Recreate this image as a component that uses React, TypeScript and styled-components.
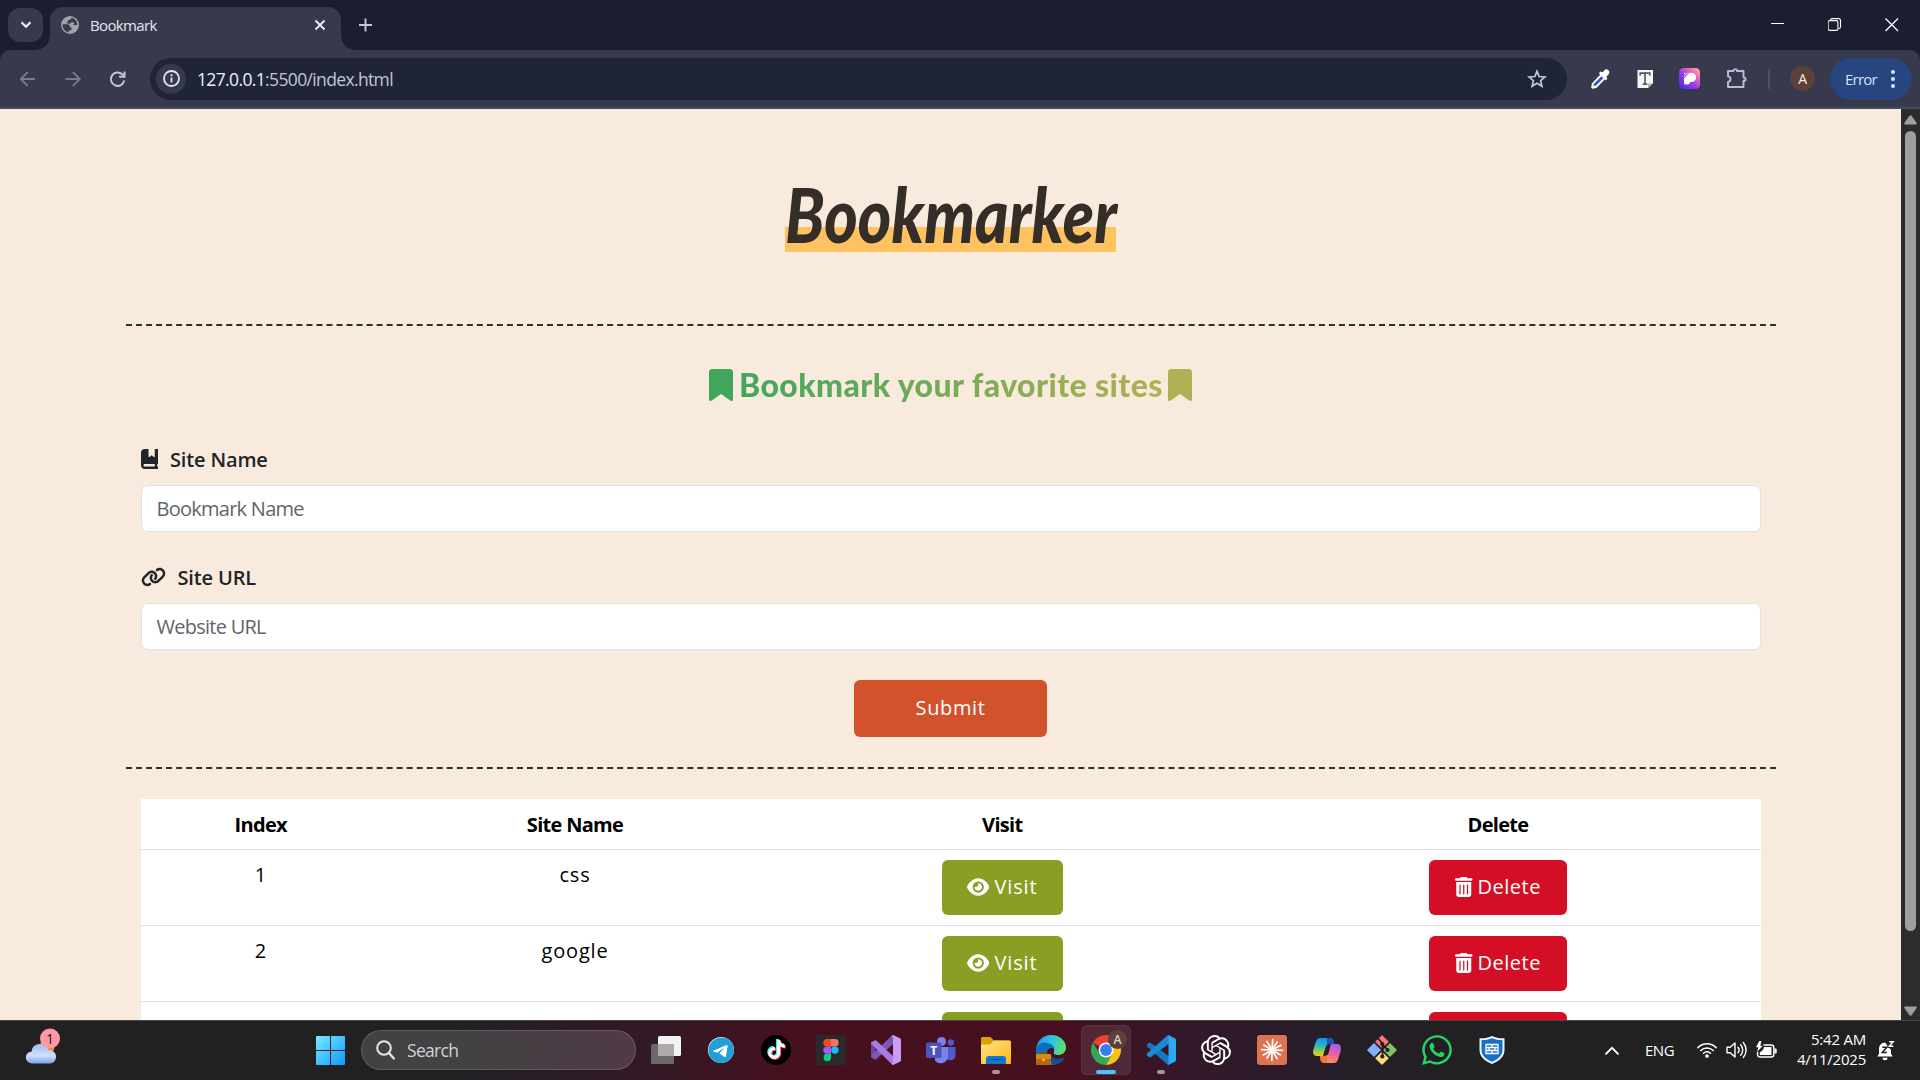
import React from "react";
import styled, { createGlobalStyle, css } from "styled-components";
import { FaBookmark, FaBookBookmark, FaLink, FaEye, FaTrashCan, FaTelegram, FaTiktok, FaWhatsapp } from "react-icons/fa6";
import { SiOpenai } from "react-icons/si";

const ui = `"Open Sans", "Noto Sans", sans-serif`;

const GlobalStyle = createGlobalStyle`
  * { box-sizing: border-box; }
  body { margin: 0; overflow: hidden; font-family: ${ui}; }
  svg { display: block; flex: none; }
`;

const Screen = styled.div`
  display: flex;
  flex-direction: column;
  width: 1920px;
  height: 1080px;
  overflow: hidden;
`;

const row = css`
  display: flex;
  align-items: center;
`;

/* ---------- browser chrome ---------- */

const TabStrip = styled.div`
  display: flex;
  align-items: flex-start;
  height: 50px;
  background: #1a1e30;
  padding-left: 8px;
`;

const TabSearch = styled.div`
  ${row}
  justify-content: center;
  width: 35px;
  height: 34px;
  margin-top: 8px;
  border-radius: 12px;
  background: #363a4c;
`;

const Tab = styled.div`
  ${row}
  position: relative;
  width: 291px;
  height: 43px;
  margin: 7px 0 0 7px;
  padding: 0 15px 7px 11px;
  border-radius: 13px 13px 0 0;
  background: #363a4c;
  color: #e4e6ee;
  &::before, &::after {
    content: "";
    position: absolute;
    bottom: 0;
    width: 14px;
    height: 14px;
  }
  &::before { left: -14px; background: radial-gradient(circle at 0 0, transparent 13.5px, #363a4c 14px); }
  &::after { right: -14px; background: radial-gradient(circle at 100% 0, transparent 13.5px, #363a4c 14px); }
`;

const TabTitle = styled.span`
  flex: 1;
  margin-left: 11px;
  font-size: 15px;
  letter-spacing: -0.65px;
`;

const NewTab = styled.div`
  margin: 18px 0 0 18px;
`;

const WindowButtons = styled.div`
  ${row}
  gap: 43px;
  margin: 16px 21px 0 auto;
`;

const ToolbarBack = styled.div`
  background: #1a1e30;
`;

const Toolbar = styled.div`
  ${row}
  height: 59px;
  padding: 0 8px 0 20px;
  border-bottom: 2px solid #474a5a;
  border-radius: 10px 10px 0 0;
  background: #363a4c;
`;

const NavButtons = styled.div`
  ${row}
  gap: 28.5px;
  width: 130px;
`;

const Omnibox = styled.div`
  ${row}
  width: 1417px;
  height: 42px;
  padding: 0 20px 0 6px;
  border-radius: 21px;
  background: #202437;
`;

const SiteInfo = styled.div`
  ${row}
  justify-content: center;
  width: 30px;
  height: 30px;
  border-radius: 50%;
  background: #363a4c;
`;

const Address = styled.span`
  flex: 1;
  margin-left: 11px;
  font-size: 17.5px;
  letter-spacing: -0.64px;
  color: #c4c7d2;
  b { font-weight: 400; color: #f0f1f6; }
`;

const Extensions = styled.div`
  ${row}
  gap: 25.7px;
  margin-left: 23px;
`;

const Divider = styled.div`
  width: 2px;
  height: 20px;
  margin-left: 20px;
  background: #4d5163;
`;

const Avatar = styled.div`
  ${row}
  justify-content: center;
  width: 25px;
  height: 25px;
  margin-left: 20px;
  border-radius: 50%;
  background: #5d4037;
  color: #f5efec;
  font-size: 14px;
`;

const ErrorPill = styled.div`
  ${row}
  justify-content: space-between;
  width: 82px;
  height: 42px;
  margin-left: auto;
  padding: 0 17.5px 0 15px;
  border-radius: 21px;
  background: #28457f;
  color: #d9e2fb;
  font-size: 15px;
  letter-spacing: -0.75px;
`;

/* ---------- web page ---------- */

const Viewport = styled.div`
  display: flex;
  height: 911px;
  overflow: hidden;
`;

const Page = styled.main`
  flex: 1;
  height: 911px;
  overflow: hidden;
  background: #f8ebdd;
`;

const Container = styled.div`
  width: 1650px;
  margin: 0 auto;
`;

const Hero = styled.header`
  display: flex;
  justify-content: center;
  height: 217px;
  padding-top: 63px;
  border-bottom: 2px dashed #352d28;
`;

const Logo = styled.h1`
  width: 331px;
  height: 80px;
  margin: 0;
  padding-top: 6px;
  background: linear-gradient(transparent 55px, #ffc261 55px);
  color: #352d28;
  font: italic 900 64px/80px Lato, sans-serif;
  white-space: nowrap;
  span {
    display: inline-block;
    transform: scaleY(1.18);
    transform-origin: 50% 60px;
  }
`;

const Form = styled.form`
  height: 443px;
  padding: 0 15px;
  border-bottom: 2px dashed #352d28;
`;

const SubtitleArea = styled.header`
  padding: 39px 0 39px;
`;

const Subtitle = styled.h2`
  ${row}
  justify-content: center;
  gap: 6px;
  height: 40px;
  margin: 0;
  font: 900 32px/40px Lato, sans-serif;
  letter-spacing: 0.4px;
  span {
    width: 423px;
    white-space: nowrap;
    color: transparent;
    background: linear-gradient(90deg, #40a65c, #b0b054);
    background-clip: text;
    -webkit-background-clip: text;
  }
`;

const Ribbon = styled(FaBookmark)<{ $tone: string }>`
  width: 24px;
  height: 32px;
  color: ${(p) => p.$tone};
`;

const BookIcon = styled(FaBookBookmark)`
  width: 17.5px;
  height: 20px;
`;

const LinkIcon = styled(FaLink)`
  width: 25px;
  height: 20px;
`;

const EyeIcon = styled(FaEye)`
  width: 22.5px;
  height: 20px;
`;

const TrashIcon = styled(FaTrashCan)`
  width: 17.5px;
  height: 20px;
`;

const Field = styled.div`
  margin-bottom: 30px;
`;

const Label = styled.label`
  ${row}
  gap: 12px;
  height: 30px;
  margin-bottom: 11px;
  font-size: 20px;
  font-weight: 650;
  letter-spacing: -0.15px;
  color: #212529;
`;

const Input = styled.input`
  display: block;
  width: 100%;
  height: 47px;
  padding: 0 15px;
  border: 1px solid #dee2e6;
  border-radius: 7px;
  background: #fff;
  font: 400 20px/30px ${ui};
  letter-spacing: -0.74px;
  &::placeholder { color: #5f656b; opacity: 1; }
`;

const Button = styled.button<{ $bg: string }>`
  ${row}
  justify-content: center;
  gap: 5px;
  height: 55px;
  margin: 0 auto;
  padding: 0 0 2px;
  border: 0;
  border-radius: 6px;
  background: ${(p) => p.$bg};
  color: #fff;
  font: 500 20px/30px ${ui};
`;

const SubmitButton = styled(Button)`
  width: 193px;
  height: 57px;
  letter-spacing: 0.6px;
`;

const VisitButton = styled(Button)`
  width: 121px;
  letter-spacing: 0.9px;
`;

const DeleteButton = styled(Button)`
  width: 138px;
  letter-spacing: 0.5px;
`;

const Table = styled.table`
  width: 1620px;
  margin: 30px 15px 0;
  border-collapse: separate;
  border-spacing: 0;
  table-layout: fixed;
  background: #fff;
  color: #000;
  font-size: 20px;
  line-height: 30px;
  text-align: center;
`;

const HeadCell = styled.th<{ $w: number }>`
  width: ${(p) => p.$w}px;
  height: 51px;
  padding: 11px 10px 9px;
  border-bottom: 1px solid #dee2e6;
  font-weight: 700;
  letter-spacing: -0.7px;
`;

const Cell = styled.td`
  height: 76px;
  padding: 10px;
  border-bottom: 1px solid #dee2e6;
  vertical-align: top;
  letter-spacing: 0.8px;
`;

const Scrollbar = styled.div`
  display: flex;
  flex-direction: column;
  align-items: center;
  width: 19px;
  padding: 6px 0 4px;
  background: #2c2c2c;
`;

const Thumb = styled.div`
  width: 11px;
  height: 800px;
  margin: 6px 0 auto;
  border-radius: 6px;
  background: #9f9f9f;
`;

/* ---------- taskbar ---------- */

const Taskbar = styled.footer`
  ${row}
  height: 60px;
  box-shadow: inset 0 1px #4a4547;
  background: linear-gradient(90deg, #212121 0, #212124 460px, #331825 650px, #47101e 800px, #47101e 1060px, #32182a 1190px, #251f28 1350px, #212121 1510px);
`;

const Weather = styled.div`
  width: 44px;
  margin-left: 20px;
`;

const Start = styled.div`
  margin-left: 252px;
`;

const SearchBox = styled.div`
  ${row}
  gap: 12px;
  width: 275px;
  height: 40px;
  margin-left: 16px;
  padding-left: 14px;
  border: 1px solid rgba(255, 255, 255, 0.16);
  border-radius: 20px;
  background: rgba(255, 255, 255, 0.15);
  color: #d4d2d3;
  font-size: 17.5px;
  letter-spacing: -0.7px;
`;

const Apps = styled.div`
  ${row}
  gap: 5.05px;
  margin-left: 5px;
`;

const AppTile = styled.div<{ $state?: "active" | "open" }>`
  ${row}
  position: relative;
  justify-content: center;
  width: 50px;
  height: 50px;
  border-radius: 6px;
  ${(p) => p.$state === "active" && css`
    background: rgba(255, 255, 255, 0.09);
    box-shadow: inset 0 0 0 1px rgba(255, 255, 255, 0.06);
  `}
  ${(p) => p.$state && css`
    &::after {
      content: "";
      position: absolute;
      bottom: 1px;
      left: 50%;
      width: ${p.$state === "active" ? 20 : 8}px;
      height: 4px;
      border-radius: 2px;
      transform: translateX(-50%);
      background: ${p.$state === "active" ? "#4cc2ff" : "#a7959b"};
    }
  `}
`;

const Tray = styled.div`
  ${row}
  margin-left: auto;
  padding-right: 25px;
  color: #fff;
  font-size: 15px;
`;

const Language = styled.span`
  width: 30px;
  margin: 0 22px 1px 26px;
  letter-spacing: -0.5px;
`;

const StatusIcons = styled.div`
  ${row}
  gap: 9px;
`;

const Clock = styled.div`
  width: 80px;
  margin: 0 11px 3px 9px;
  text-align: right;
  line-height: 20px;
  letter-spacing: -0.22px;
`;

/* ---------- drawings ---------- */

const Globe = () => (
  <svg width="18" height="18" viewBox="0 0 18 18">
    <circle cx="9" cy="9" r="9" fill="#9ea3a8" />
    <path d="M1.600 8.300h4.700c1.600 0 2.700 1.100 2.700 2.600v.6h1.500v1.600c0 .8-.6 1.400-1.400 1.400H7.600v1.900c-3.800-.7-6.400-4.200-6-8.100z" fill="#363a4c" />
    <path d="M10.200 1.700v.5c0 .9-.7 1.700-1.600 1.700H6.900v1.500c0 .8-.4 1.100-1.200 1.100v1h3.800c2 0 2.700 1.400 3.900 1.400h2.900c0-3.600-2.600-6.700-6.100-7.200z" fill="#363a4c" />
    <path d="M9.800 6.300h3.200v2H9.800z" fill="#9ea3a8" />
  </svg>
);

const Reload = () => (
  <svg width="18" height="18" viewBox="0 0 18 18" fill="none" stroke="#c3c7dc" strokeWidth="2">
    <path d="M15.200 10.400A6.700 6.700 0 1 1 13.200 4.300L15.200 6.300" />
    <path d="M15.500 1.600v5.200h-5.400" />
  </svg>
);

const Arrow = ({ flip = false }: { flip?: boolean }) => (
  <svg width="16" height="16" viewBox="0 0 16 16" fill="none" stroke="#777b8c" strokeWidth="1.800">
    <path d={flip ? "M0.500 8h14M7.800 1l7 7-7 7" : "M15 8h-14M7.700 1l-7 7 7 7"} />
  </svg>
);

const Eyedropper = () => (
  <svg width="21" height="22" viewBox="0 0 22 22">
    <path d="M11.500 5.500l5 5-9.800 9.800-4.300.9-1.200-1.200.8-4.400z" fill="#fff" />
    <path d="M12 8.200l2 2-7.700 7.600-2.700.7.500-2.600z" fill="#2f55c8" />
    <path d="M10.800 3.200l2.400.8 2.400-2.600c2-2 6.400 1.700 4.200 4.300L17.300 8.400l.8 2.600-1.500 1.200-7.200-7.200z" fill="#fff" />
  </svg>
);

const TextExtension = () => (
  <svg width="17" height="18" viewBox="0 0 17 18">
    <path d="M.5 0H16v13l-5 5H.5z" fill="#f6f6f6" />
    <path d="M11 18v-4.500h5z" fill="#b4b4b4" />
    <path d="M3.200 5.400V3.200h9.600v2.200M8 3.200v11M5.700 14.200h4.600" fill="none" stroke="#555a63" strokeWidth="1.700" />
  </svg>
);

const PaletteExtension = () => (
  <svg width="21" height="21" viewBox="0 0 21 21">
    <defs>
      <linearGradient id="pal" x1="0" y1="1" x2="1" y2="0">
        <stop offset="0" stopColor="#3a2cf0" />
        <stop offset=".45" stopColor="#9a3be8" />
        <stop offset=".75" stopColor="#f471b4" />
        <stop offset="1" stopColor="#ffc09a" />
      </linearGradient>
    </defs>
    <rect width="21" height="21" rx="4.500" fill="url(#pal)" />
    <path d="M5 10.200L10.500 4.700H12.500a4.500 4.500 0 0 1 0 9.300H11c0 1.500-.8 2.500-2 2.500H6.500c-1 0-1.500-.6-1.500-1.500z" fill="#fff" />
    <path d="M5 8.400l3.600-3.600M5 6l1.300-1.200" stroke="#fff" strokeWidth=".9" />
  </svg>
);

const Puzzle = () => (
  <svg width="22" height="21" viewBox="0 0 22 21" fill="none" stroke="#b9bdd6" strokeWidth="1.900" strokeLinejoin="round">
    <path d="M2 3h5.500c0-2.500 3.500-2.500 3.500 0h6.500v6.500c2.800 0 2.800 3.300 0 3.300v6.200H2v-5c3.300-.5 3.300-5.300 0-5.800z" />
  </svg>
);

const TaskView = () => (
  <svg width="30" height="28" viewBox="0 0 30 28">
    <rect y="8" width="23" height="20" rx="1.500" fill="#6b6868" />
    <rect x="7" y="0" width="23" height="20" rx="1.500" fill="#f2f2f2" />
    <path d="M7 8h16v12H8.500A1.500 1.500 0 0 1 7 18.500z" fill="#aeaaaa" />
  </svg>
);

const Disc = styled.div<{ $size: number; $bg: string }>`
  ${row}
  position: relative;
  justify-content: center;
  width: ${(p) => p.$size}px;
  height: ${(p) => p.$size}px;
  border-radius: 50%;
  background: ${(p) => p.$bg};
  overflow: hidden;
`;

const NoteStack = styled.div`
  position: relative;
  width: 18px;
  height: 20px;
  svg { position: absolute; left: 0; top: 0; }
  svg:nth-child(1) { left: -1px; top: -1px; color: #25f4ee; }
  svg:nth-child(2) { left: 1px; top: 1px; color: #fe2c55; }
  svg:nth-child(3) { color: #fff; }
`;

const Figma = () => (
  <svg width="30" height="30" viewBox="0 0 30 30">
    <rect width="30" height="30" rx="1.500" fill="#2b2a2b" />
    <path d="M15 4h-4a3.700 3.700 0 0 0 0 7.400h4z" fill="#f24e1e" />
    <path d="M15 4h4a3.700 3.700 0 0 1 0 7.400h-4z" fill="#ff7262" />
    <path d="M15 11.400h-4a3.700 3.700 0 0 0 0 7.400h4z" fill="#a259ff" />
    <circle cx="18.900" cy="15.100" r="3.700" fill="#1abcfe" />
    <path d="M15 18.800h-4a3.700 3.700 0 1 0 4 3.700z" fill="#0acf83" />
  </svg>
);

const VisualStudio = () => (
  <svg width="30" height="30" viewBox="0 0 30 30">
    <path d="M0 7.500L4.500 5.500v19L0 22z" fill="#6a479f" />
    <path d="M0 22v-1.500L20 1.500 22 0v9L5.500 24a2 2 0 0 1-2 .4z" fill="#7d57b8" />
    <path d="M0 8.500V7.500l3.500-2a2 2 0 0 1 2 .3L22 21v9l-2-1.500z" fill="#a87be2" />
    <path d="M20 1.500L22 0l7 3.300a2 2 0 0 1 1 1.700v20a2 2 0 0 1-1 1.700L22 30l-2-1.500c1.200.4 2-.3 2-1.500V3c0-1.200-.8-1.900-2-1.500z" fill="#cb9bf8" />
  </svg>
);

const Teams = () => (
  <svg width="30" height="27" viewBox="0 0 30 27">
    <circle cx="24.800" cy="5.500" r="3.200" fill="#5059c9" />
    <path d="M20 10h9.500v8.500a5 5 0 0 1-9.500 2z" fill="#5059c9" />
    <circle cx="15.500" cy="4.500" r="4.500" fill="#7b83eb" />
    <path d="M9 10h13v9.500a7.300 7.300 0 0 1-13 4z" fill="#7b83eb" />
    <rect y="5.500" width="15.500" height="15.500" rx="1.500" fill="#4b53bc" />
    <text x="7.700" y="17.500" textAnchor="middle" fill="#fff" fontFamily="Open Sans, sans-serif" fontWeight="700" fontSize="12">T</text>
  </svg>
);

const Explorer = () => (
  <svg width="30" height="27" viewBox="0 0 30 27">
    <defs>
      <linearGradient id="fold" x1="0" y1="0" x2="1" y2="1">
        <stop offset="0" stopColor="#ffe48a" />
        <stop offset="1" stopColor="#fcb913" />
      </linearGradient>
    </defs>
    <path d="M0 1.500A1.500 1.500 0 0 1 1.500 0h8l3.500 3.500h15a2 2 0 0 1 2 2V12H0z" fill="#e0a000" />
    <path d="M0 7.500h9l4-4h15.500A1.500 1.500 0 0 1 30 5v21a1 1 0 0 1-1 1H1a1 1 0 0 1-1-1z" fill="url(#fold)" />
    <path d="M5 27v-5a3 3 0 0 1 3-3h14a3 3 0 0 1 3 3v5z" fill="#0f78d4" />
    <path d="M9 22.500h12" stroke="#0a4f98" strokeWidth="1.200" strokeLinecap="round" />
  </svg>
);

const Edge = () => (
  <svg width="30" height="30" viewBox="0 0 30 30">
    <defs>
      <linearGradient id="edgeTop" x1="0" y1=".3" x2="1" y2=".6">
        <stop offset="0" stopColor="#1f9be6" />
        <stop offset=".5" stopColor="#34c6dc" />
        <stop offset="1" stopColor="#62e257" />
      </linearGradient>
    </defs>
    <path d="M0 16C0 6.500 6.500 0 15 0c9 0 15 6 15 12.500 0 5-4 7.500-8 7.500-3 0-5-1.200-4.200-3C20 12 14 9 9 11 4 13 4 21 6 25 2 23 0 20 0 16z" fill="url(#edgeTop)" />
    <path d="M0 16c0-5 4-9 9-8.500C14 8 18 10 18 14c-4-3-8 1-7 6 1 4 5 7 10 6 3-.3 5-1.300 7.300-2.500C25 28 20 30 15 30 6 30 0 24 0 16z" fill="#0c6fc4" />
    <path d="M15 19c1 5 8 6 13.500 3-3 5.500-7 8-12.500 8z" fill="#154e91" />
    <rect y="19" width="15" height="11" rx="1" fill="#d98a12" />
    <path d="M4.500 19v-1.800h6V19" fill="none" stroke="#8b4c05" strokeWidth="1.400" />
    <path d="M0 24h15v6H0z" fill="#b8660a" />
    <rect x="6.500" y="24" width="2" height="2" fill="#ffe08a" />
  </svg>
);

const Chrome = () => (
  <svg width="44" height="44" viewBox="-3 -3 44 44">
    <path d="M19 19L6 11.500A15 15 0 0 1 32 11.500z" fill="#ea4335" />
    <path d="M6 11.500A15 15 0 0 0 19 34l6.500-11.200L12.500 22.800z" fill="#34a853" />
    <path d="M19 12h13.300A15 15 0 0 1 19 34l6.300-11.300z" fill="#fbc116" />
    <circle cx="19" cy="19" r="7.500" fill="#fff" />
    <circle cx="19" cy="19" r="5.900" fill="#3b7ded" />
    <circle cx="30.500" cy="8.500" r="9.500" fill="#5d4037" />
    <text x="30.500" y="13" textAnchor="middle" fill="#ddd2ce" fontFamily="Open Sans, sans-serif" fontWeight="600" fontSize="12">A</text>
  </svg>
);

const VSCode = () => (
  <svg width="30" height="30" viewBox="0 0 30 30">
    <path d="M1 9.500l2-1.800h1.500L24 22v7.500L22 30 .8 11.200z" fill="#1479c4" />
    <path d="M1 20.500l2 1.800h1.500L24 8V.5L22 0 .8 18.800z" fill="#1b8ad6" />
    <path d="M22 0l7 3.200a2 2 0 0 1 1 1.600v20.400a2 2 0 0 1-1 1.600L22 30c.4-.4.500-.8.500-1.300V1.300C22.500.8 22.400.4 22 0z" fill="#2fa8f2" />
  </svg>
);

const Claude = () => (
  <svg width="30" height="30" viewBox="0 0 30 30">
    <rect width="30" height="30" rx="3" fill="#dd7350" />
    <g stroke="#fff" strokeWidth="1.700" strokeLinecap="round">
      {[4, 33, 62, 92, 120, 149, 181, 212, 240, 272, 301, 329].map((a, i) => (
        <path key={a} d={`M15 15V${[4.500, 5.500, 5][i % 3]}`} transform={`rotate(${a} 15 15)`} />
      ))}
    </g>
  </svg>
);

const Copilot = () => (
  <svg width="28" height="25" viewBox="0 0 28 25">
    <defs>
      <linearGradient id="cpA" x1=".4" y1="0" x2=".3" y2="1">
        <stop offset="0" stopColor="#168ff0" />
        <stop offset=".45" stopColor="#2fb9c0" />
        <stop offset=".75" stopColor="#9ccb4a" />
        <stop offset="1" stopColor="#f8c812" />
      </linearGradient>
      <linearGradient id="cpB" x1=".7" y1="0" x2=".3" y2="1">
        <stop offset="0" stopColor="#a45cf0" />
        <stop offset=".5" stopColor="#f0619a" />
        <stop offset="1" stopColor="#ff9a4a" />
      </linearGradient>
    </defs>
    <path d="M7 0h10c2 0 3 1.500 3.500 3.500L21 6h-5c-2 0-3 1.500-3.700 4L10 18H4c-4 0-4.500-3-3.500-7L3 3.500C3.700 1.300 5 0 7 0z" fill="url(#cpA)" />
    <path d="M14 0h3c2 0 3 1.500 3.500 3.500L21 6h-5l-2 1.500z" fill="#1b50c4" />
    <path d="M21 25H11c-2 0-3-1.500-3.500-3.500L7 18h5c2 0 3-1 3.700-3.500L18 6h6c4 0 4.500 3.500 3.500 7.500L25 21.500c-.7 2.200-2 3.500-4 3.500z" fill="url(#cpB)" />
    <path d="M14 25h-3c-2 0-3-1.500-3.500-3.500L7 18h5l2-1z" fill="#f9743b" />
  </svg>
);

const Git = () => (
  <svg width="30" height="30" viewBox="0 0 30 30">
    <path d="M15 0l6.800 6.800-6.800 6.800-6.800-6.800z" fill="#f8787c" />
    <path d="M7 8l7 7-7 7-7-7z" fill="#84b0fb" />
    <path d="M23 8l7 7-7 7-7-7z" fill="#7fc661" />
    <path d="M15 16.400l6.800 6.800L15 30l-6.800-6.800z" fill="#fbdc77" />
    <path d="M11 3.500l4.500 5v13M15.500 9.500l5.500 5.500" fill="none" stroke="#23191f" strokeWidth="1.700" />
    <circle cx="15.300" cy="9" r="2.100" fill="#23191f" />
    <circle cx="20.500" cy="15" r="2.100" fill="#23191f" />
    <circle cx="15.300" cy="21.500" r="2.100" fill="#23191f" />
  </svg>
);

const Shield = () => (
  <svg width="26" height="28" viewBox="0 0 26 28">
    <path d="M13 0c4 2 8 2.500 12.500 2.300V14c0 6.500-5 11-12.500 14C5.500 25 .5 20.500.5 14V2.300C5 2.500 9 2 13 0z" fill="#e9f4fc" />
    <path d="M13 2.200c3.500 1.400 6.800 1.900 10.500 1.800v10c0 5.300-4 9-10.500 11.800C6.500 23 2.500 19.300 2.500 14V4C6.200 4.100 9.500 3.600 13 2.200z" fill="#1670c6" />
    <path d="M7 8.500h12v9H7zM7 11.500h12M7 14.500h12M13 8.500v3M10 11.500v3M16 11.500v3M13 14.500v3" fill="none" stroke="#fff" strokeWidth="1.300" />
  </svg>
);

const WeatherIcon = () => (
  <svg width="44" height="44" viewBox="0 0 44 44">
    <defs>
      <linearGradient id="cl" x1="0" y1="0" x2="0" y2="1">
        <stop offset="0" stopColor="#9dbdf5" />
        <stop offset=".6" stopColor="#cfe0fa" />
        <stop offset="1" stopColor="#7ba2ea" />
      </linearGradient>
    </defs>
    <circle cx="27" cy="19" r="7.500" fill="#f08a1a" />
    <path d="M12 35.500a6 6 0 0 1-.3-12C12 18 16 16 20 16s7.500 2.500 8 6c4-.3 8 2 8 6.700 0 4-3 6.800-6.500 6.800z" fill="url(#cl)" />
    <circle cx="30" cy="10.500" r="10" fill="#ff99a4" />
    <text x="30" y="15.500" textAnchor="middle" fill="#241416" fontFamily="Open Sans, sans-serif" fontSize="14">1</text>
  </svg>
);

const WindowsLogo = () => (
  <svg width="29" height="29" viewBox="0 0 29 29">
    <defs>
      <linearGradient id="win" x1="0" y1="0" x2="1" y2="1">
        <stop offset="0" stopColor="#75edff" />
        <stop offset="1" stopColor="#0d98ff" />
      </linearGradient>
    </defs>
    <path d="M1 0h13v14H0V1a1 1 0 0 1 1-1zM15 0h13a1 1 0 0 1 1 1v13H15zM0 15h14v14H1a1 1 0 0 1-1-1zM15 15h14v13a1 1 0 0 1-1 1H15z" fill="url(#win)" />
  </svg>
);

const Wifi = () => (
  <svg width="20" height="16" viewBox="0 0 20 16" fill="none" stroke="#fff" strokeWidth="1.500" strokeLinecap="round">
    <path d="M.9 5.600a12.800 12.800 0 0 1 18.200 0M3.700 8.500a8.900 8.900 0 0 1 12.600 0M6.500 11.300a4.900 4.900 0 0 1 7 0" />
    <circle cx="10" cy="14" r="1.100" fill="#fff" />
  </svg>
);

const Volume = () => (
  <svg width="21" height="18" viewBox="0 0 21 18" fill="none" stroke="#fff" strokeWidth="1.400" strokeLinecap="round" strokeLinejoin="round">
    <path d="M1 6.200h3.200L9 2v14l-4.800-4.200H1zM12 6.200a4.400 4.400 0 0 1 0 5.600M14.700 3.700a8 8 0 0 1 0 10.600M17.300 1.500a11.500 11.500 0 0 1 0 15" />
  </svg>
);

const Battery = () => (
  <svg width="21" height="18" viewBox="0 0 21 18">
    <path d="M7.500 4h7.800A2.500 2.500 0 0 1 17.800 6.500v7a2.500 2.500 0 0 1-2.500 2.500H4a2.500 2.500 0 0 1-2.500-2.500V11" fill="none" stroke="#fff" strokeWidth="1.400" />
    <path d="M8 6h7.500v8H3.800v-2.500L7 9z" fill="#fff" />
    <path d="M18.500 7.500h1.200a1 1 0 0 1 1 1v3a1 1 0 0 1-1 1h-1.200z" fill="#fff" />
    <path d="M3.300 0L0 6.300h2.300L1 11l5.800-6.300H4.300L5.500 0z" fill="#fff" />
  </svg>
);

const Bell = () => (
  <svg width="18" height="21" viewBox="0 0 18 21">
    <path d="M8 2.500a5.900 5.900 0 0 0-6 6v5.300L.3 16.500h15.400L14 13.800V10z" fill="#fff" />
    <path d="M5.500 17.700h5a2.500 2.500 0 0 1-5 0z" fill="#fff" />
    <rect x="10.500" y="0" width="7.500" height="8" fill="#212121" />
    <path d="M12.200 1.700h4l-4 4.600h4" fill="none" stroke="#fff" strokeWidth="1.400" />
    <path d="M5.300 7.300h4.500L5.300 12.500h4.500" fill="none" stroke="#212121" strokeWidth="1.500" />
  </svg>
);

const sites = ["css", "google"];

export default function App() {
  return (
    <Screen>
      <GlobalStyle />
      <TabStrip>
        <TabSearch>
          <svg width="12" height="8" viewBox="0 0 12 8" fill="none" stroke="#f0f1f6" strokeWidth="2.200"><path d="M1.500 1.200L6 5.700l4.500-4.500" /></svg>
        </TabSearch>
        <Tab>
          <Globe />
          <TabTitle>Bookmark</TabTitle>
          <svg width="12" height="12" viewBox="0 0 12 12" stroke="#eceef4" strokeWidth="1.900"><path d="M1.500 1.500l9 9M10.500 1.500l-9 9" /></svg>
        </Tab>
        <NewTab>
          <svg width="13" height="14" viewBox="0 0 13 14" stroke="#c3c7dc" strokeWidth="1.900"><path d="M0 7h13M6.500.5v13" /></svg>
        </NewTab>
        <WindowButtons>
          <svg width="14" height="16" viewBox="0 0 14 16"><path d="M0 7h13v1H0z" fill="#fff" /></svg>
          <svg width="14" height="16" viewBox="0 0 14 16" fill="none" stroke="#fff" strokeWidth="1.100">
            <rect x=".1" y="4.600" width="9.800" height="9.800" rx="1.500" />
            <path d="M2.500 4.200C2.500 3 3 2.600 4 2.600h6.500a2 2 0 0 1 2 2V11c0 1.200-.6 1.600-1.800 1.600" />
          </svg>
          <svg width="14" height="16" viewBox="0 0 14 16" stroke="#fff" strokeWidth="1.300"><path d="M.5 2.500l12.500 12.500M13 2.500L.5 15" /></svg>
        </WindowButtons>
      </TabStrip>
      <ToolbarBack>
        <Toolbar>
          <NavButtons><Arrow /><Arrow flip /><Reload /></NavButtons>
          <Omnibox>
            <SiteInfo>
              <svg width="17" height="17" viewBox="0 0 17 17" fill="none" stroke="#e4e6ee" strokeWidth="1.800">
                <circle cx="8.500" cy="8.500" r="7.500" /><path d="M8.500 7.500v5M8.500 4.300v1.900" />
              </svg>
            </SiteInfo>
            <Address><b>127.0.0.1</b>:5500/index.html</Address>
            <svg width="20" height="20" viewBox="0 0 20 20" fill="none" stroke="#c8cad3" strokeWidth="1.700">
              <path d="M10 2.300l2.200 5.200 5.700.5-4.300 3.700 1.300 5.600-4.900-3-4.900 3 1.300-5.600L2.100 8l5.700-.5z" />
            </svg>
          </Omnibox>
          <Extensions>
            <Eyedropper /><TextExtension /><PaletteExtension /><Puzzle />
          </Extensions>
          <Divider />
          <Avatar>A</Avatar>
          <ErrorPill>
            Error
            <svg width="4" height="18" viewBox="0 0 4 18" fill="#d9e2fb"><circle cx="2" cy="2" r="2" /><circle cx="2" cy="9" r="2" /><circle cx="2" cy="16" r="2" /></svg>
          </ErrorPill>
        </Toolbar>
      </ToolbarBack>

      <Viewport>
        <Page>
          <Container>
            <Hero><Logo><span>Bookmarker</span></Logo></Hero>
            <Form>
              <SubtitleArea>
                <Subtitle>
                  <Ribbon $tone="#40a65c" />
                  <span>Bookmark your favorite sites</span>
                  <Ribbon $tone="#b0b054" />
                </Subtitle>
              </SubtitleArea>
              <Field>
                <Label><BookIcon />Site Name</Label>
                <Input placeholder="Bookmark Name" />
              </Field>
              <Field>
                <Label><LinkIcon />Site URL</Label>
                <Input placeholder="Website URL" />
              </Field>
              <SubmitButton type="button" $bg="#d2522b">Submit</SubmitButton>
            </Form>
            <Table>
              <thead>
                <tr>
                  <HeadCell $w={240.5}>Index</HeadCell>
                  <HeadCell $w={388}>Site Name</HeadCell>
                  <HeadCell $w={466.5}>Visit</HeadCell>
                  <HeadCell $w={525}>Delete</HeadCell>
                </tr>
              </thead>
              <tbody>
                {sites.map((name, i) => (
                  <tr key={name}>
                    <Cell>{i + 1}</Cell>
                    <Cell>{name}</Cell>
                    <Cell><VisitButton $bg="#8a9e24"><EyeIcon />Visit</VisitButton></Cell>
                    <Cell><DeleteButton $bg="#d40f25"><TrashIcon />Delete</DeleteButton></Cell>
                  </tr>
                ))}
                <tr>
                  <Cell />
                  <Cell />
                  <Cell><VisitButton $bg="#8a9e24" /></Cell>
                  <Cell><DeleteButton $bg="#d40f25" /></Cell>
                </tr>
              </tbody>
            </Table>
          </Container>
        </Page>
        <Scrollbar>
          <svg width="13" height="10" viewBox="0 0 13 10" fill="#9f9f9f"><path d="M5.500.8a1.300 1.300 0 0 1 2 0l5 7c.6.9.2 1.700-.8 1.700H1.300c-1 0-1.400-.8-.8-1.700z" /></svg>
          <Thumb />
          <svg width="13" height="10" viewBox="0 0 13 10" fill="#9f9f9f"><path d="M5.500 9.200a1.300 1.300 0 0 0 2 0l5-7C13.100 1.300 12.700.5 11.700.5H1.300C.3.500-.1 1.300.5 2.200z" /></svg>
        </Scrollbar>
      </Viewport>

      <Taskbar>
        <Weather><WeatherIcon /></Weather>
        <Start><WindowsLogo /></Start>
        <SearchBox>
          <svg width="19" height="20" viewBox="0 0 19 20" fill="none" stroke="#e8e6e7" strokeWidth="2"><circle cx="8" cy="8" r="6.800" /><path d="M12.800 12.800l5 5.700" strokeWidth="2.300" strokeLinecap="round" /></svg>
          Search
        </SearchBox>
        <Apps>
          <AppTile><TaskView /></AppTile>
          <AppTile><Disc $size={26} $bg="#fff"><FaTelegram size={27} color="#229ed9" /></Disc></AppTile>
          <AppTile><Disc $size={30} $bg="#000"><NoteStack><FaTiktok size={19} /><FaTiktok size={19} /><FaTiktok size={19} /></NoteStack></Disc></AppTile>
          <AppTile><Figma /></AppTile>
          <AppTile><VisualStudio /></AppTile>
          <AppTile><Teams /></AppTile>
          <AppTile $state="open"><Explorer /></AppTile>
          <AppTile><Edge /></AppTile>
          <AppTile $state="active"><Chrome /></AppTile>
          <AppTile $state="open"><VSCode /></AppTile>
          <AppTile><SiOpenai size={30} color="#fff" /></AppTile>
          <AppTile><Claude /></AppTile>
          <AppTile><Copilot /></AppTile>
          <AppTile><Git /></AppTile>
          <AppTile><FaWhatsapp size={34} color="#25d366" /></AppTile>
          <AppTile><Shield /></AppTile>
        </Apps>
        <Tray>
          <svg width="14" height="9" viewBox="0 0 14 9" fill="none" stroke="#fff" strokeWidth="1.900" strokeLinecap="round"><path d="M1 7.800l6-6 6 6" /></svg>
          <Language>ENG</Language>
          <StatusIcons><Wifi /><Volume /><Battery /></StatusIcons>
          <Clock>5:42 AM<br />4/11/2025</Clock>
          <Bell />
        </Tray>
      </Taskbar>
    </Screen>
  );
}
